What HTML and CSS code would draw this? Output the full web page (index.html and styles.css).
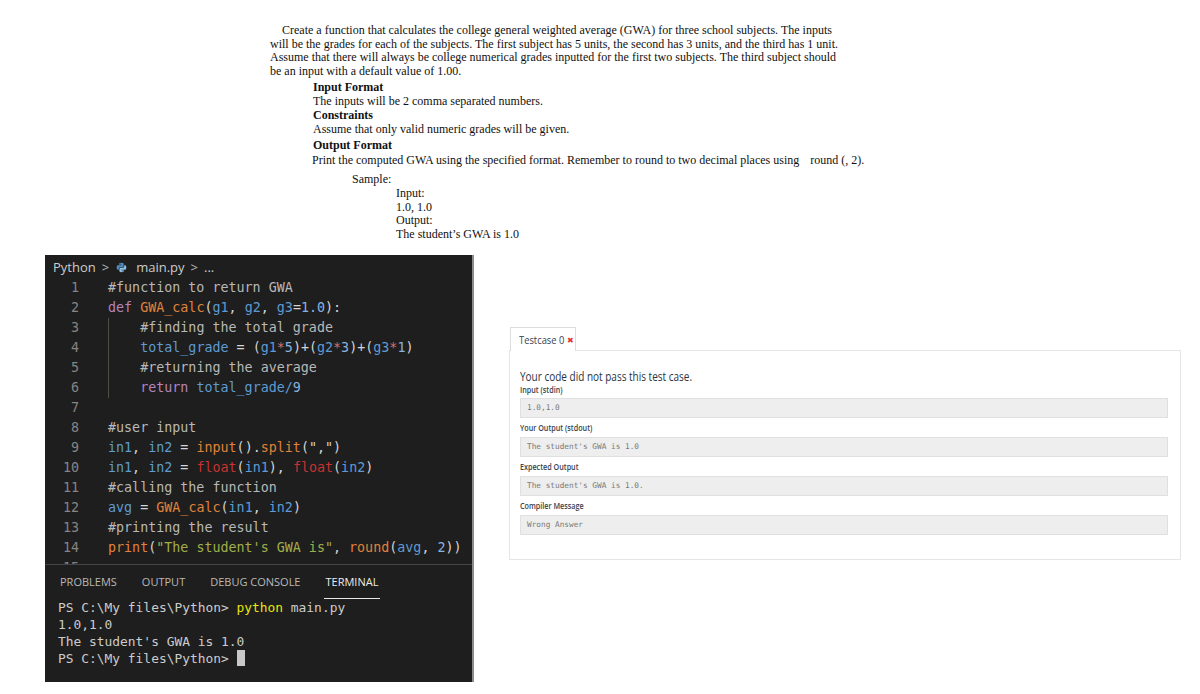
FILE: index.html
```html
<!DOCTYPE html>
<html>
<head>
<meta charset="utf-8">
<link rel="stylesheet" href="styles.css">
</head>
<body>
<div class="page">
  <section class="problem">
    <div class="para">
      <div class="pl first">Create a function that calculates the college general weighted average (GWA) for three school subjects. The inputs</div>
      <div class="pl">will be the grades for each of the subjects. The first subject has 5 units, the second has 3 units, and the third has 1 unit.</div>
      <div class="pl">Assume that there will always be college numerical grades inputted for the first two subjects. The third subject should</div>
      <div class="pl">be an input with a default value of 1.00.</div>
    </div>
    <div class="sec">
      <div class="pl h h-in">Input Format</div>
      <div class="pl">The inputs will be 2 comma separated numbers.</div>
      <div class="pl h">Constraints</div>
      <div class="pl">Assume that only valid numeric grades will be given.</div>
      <div class="pl h h-out">Output Format</div>
      <div class="pl print">Print the computed GWA using the specified format. Remember to round to two decimal places using <span class="rnd">round (, 2).</span></div>
    </div>
    <div class="sample">
      <div class="pl">Sample:</div>
      <div class="sample-body">
        <div class="pl">Input:</div>
        <div class="pl">1.0, 1.0</div>
        <div class="pl">Output:</div>
        <div class="pl">The student’s GWA is 1.0</div>
      </div>
    </div>
  </section>

  <div class="workspace">
    <div class="editor">
      <div class="crumbs">
        <span>Python</span>
        <span class="chev">&gt;</span>
        <svg class="pyicon" width="11" height="11" viewBox="0 0 16 16" aria-hidden="true">
          <path fill="#4f8fc4" d="M7.9 1C4.4 1 4.6 2.5 4.6 2.5v1.6H8v.5H3.2S1 4.3 1 7.9c0 3.5 1.9 3.4 1.9 3.4h1.2V9.6s-.1-1.9 1.9-1.9h3.3s1.8 0 1.8-1.8V2.8S11.4 1 7.9 1zM6.1 2c.3 0 .6.3.6.6s-.3.6-.6.6-.6-.3-.6-.6.3-.6.6-.6z"/>
          <path fill="#8cc0e6" d="M8.1 15c3.5 0 3.3-1.5 3.3-1.5v-1.6H8v-.5h4.8S15 11.7 15 8.1c0-3.5-1.9-3.4-1.9-3.4h-1.2v1.7s.1 1.9-1.9 1.9H6.7s-1.8 0-1.8 1.8v3.1S4.6 15 8.1 15zm1.8-1c-.3 0-.6-.3-.6-.6s.3-.6.6-.6.6.3.6.6-.3.6-.6.6z"/>
        </svg>
        <span>main.py</span>
        <span class="chev">&gt;</span>
        <span>...</span>
      </div>
      <div class="code">
        <div class="line"><span class="ln">1</span><span class="src"><span class="c">#function to return GWA</span></span></div>
        <div class="line"><span class="ln">2</span><span class="src"><span class="k">def</span> <span class="f">GWA_calc</span><span class="p">(</span><span class="v">g1</span><span class="p">, </span><span class="v">g2</span><span class="p">, </span><span class="v">g3</span><span class="p">=</span><span class="n">1.0</span><span class="p">):</span></span></div>
        <div class="line"><span class="ln">3</span><span class="src guide">    <span class="c">#finding the total grade</span></span></div>
        <div class="line"><span class="ln">4</span><span class="src guide">    <span class="v">total_grade</span> <span class="p">=</span> <span class="p">(</span><span class="v">g1</span><span class="o">*</span><span class="n">5</span><span class="p">)+(</span><span class="v">g2</span><span class="o">*</span><span class="n">3</span><span class="p">)+(</span><span class="v">g3</span><span class="o">*</span><span class="n">1</span><span class="p">)</span></span></div>
        <div class="line"><span class="ln">5</span><span class="src guide">    <span class="c">#returning the average</span></span></div>
        <div class="line"><span class="ln">6</span><span class="src guide">    <span class="k">return</span> <span class="v">total_grade</span><span class="v">/</span><span class="n">9</span></span></div>
        <div class="line"><span class="ln">7</span><span class="src"></span></div>
        <div class="line"><span class="ln">8</span><span class="src"><span class="c">#user input</span></span></div>
        <div class="line"><span class="ln">9</span><span class="src"><span class="v">in1</span><span class="p">, </span><span class="v">in2</span> <span class="p">=</span> <span class="f">input</span><span class="p">().</span><span class="f">split</span><span class="p">(",")</span></span></div>
        <div class="line"><span class="ln">10</span><span class="src"><span class="v">in1</span><span class="p">, </span><span class="v">in2</span> <span class="p">=</span> <span class="b">float</span><span class="p">(</span><span class="v">in1</span><span class="p">), </span><span class="b">float</span><span class="p">(</span><span class="v">in2</span><span class="p">)</span></span></div>
        <div class="line"><span class="ln">11</span><span class="src"><span class="c">#calling the function</span></span></div>
        <div class="line"><span class="ln">12</span><span class="src"><span class="v">avg</span> <span class="p">=</span> <span class="f">GWA_calc</span><span class="p">(</span><span class="v">in1</span><span class="p">, </span><span class="v">in2</span><span class="p">)</span></span></div>
        <div class="line"><span class="ln">13</span><span class="src"><span class="c">#printing the result</span></span></div>
        <div class="line"><span class="ln">14</span><span class="src"><span class="f">print</span><span class="p">(</span><span class="s">"The student's GWA is"</span><span class="p">, </span><span class="f">round</span><span class="p">(</span><span class="v">avg</span><span class="p">, </span><span class="n">2</span><span class="p">))</span></span></div>
        <div class="line"><span class="ln">15</span><span class="src"></span></div>
      </div>
      <div class="panel">
        <div class="tabs">
          <span class="tab">PROBLEMS</span>
          <span class="tab">OUTPUT</span>
          <span class="tab">DEBUG CONSOLE</span>
          <span class="tab active">TERMINAL</span>
        </div>
        <div class="term">
          <div class="tl">PS C:\My files\Python&gt; <span class="y">python</span> main.py</div>
          <div class="tl">1.0,1.0</div>
          <div class="tl">The student's GWA is 1.0</div>
          <div class="tl">PS C:\My files\Python&gt; <span class="cursor"></span></div>
        </div>
      </div>
    </div>

    <div class="results">
      <div class="tc-tab"><span class="sq">Testcase 0</span><span class="x">✖</span></div>
      <div class="tc-box">
        <div class="msg"><span class="sq">Your code did not pass this test case.</span></div>
        <div class="lbl"><span class="sq">Input (stdin)</span></div>
        <div class="out">1.0,1.0</div>
        <div class="lbl"><span class="sq">Your Output (stdout)</span></div>
        <div class="out">The student's GWA is 1.0</div>
        <div class="lbl"><span class="sq">Expected Output</span></div>
        <div class="out">The student's GWA is 1.0.</div>
        <div class="lbl"><span class="sq">Compiler Message</span></div>
        <div class="out">Wrong Answer</div>
      </div>
    </div>
  </div>
</div>
</body>
</html>
```

FILE: styles.css
```css
* { box-sizing: border-box; }
html, body { margin: 0; padding: 0; background: #ffffff; }
.page { width: 1200px; height: 694px; overflow: hidden; }

/* ---------- problem statement ---------- */
.problem {
  padding: 24px 0 0 270px;
  font-family: "Liberation Serif", "Times New Roman", serif;
  font-size: 12px;
  color: #111;
  height: 255px;
}
.pl { white-space: nowrap; line-height: 14px; }
.para .pl { line-height: 13.7px; }
.para .first { padding-left: 12px; }
.sec { padding-left: 43px; }
.h { font-weight: bold; }
.h-in { margin-top: 1px; }
.h-out { margin-top: 2px; }
.print { margin-left: -1px; margin-top: 1px; }
.rnd { margin-left: 8px; }
.sample { padding-left: 82px; margin-top: 5px; }
.sample-body { padding-left: 44px; margin-top: 1px; }
.sample-body .pl { line-height: 13.7px; }

/* ---------- workspace ---------- */
.workspace { display: flex; padding-left: 45px; }

.editor {
  width: 429px;
  height: 427px;
  background: #1e1e1e;
  border-right: 2px solid #8c8c8c;
  display: flex;
  flex-direction: column;
  flex: none;
}
.crumbs {
  flex: none;
  height: 23px;
  padding: 1px 0 0 8px;
  line-height: 22px;
  font-family: "Open Sans", "Noto Sans", sans-serif;
  font-size: 13px;
  color: #cccccc;
  display: flex;
  align-items: center;
  gap: 6px;
}
.crumbs .chev { color: #bbbbbb; font-size: 13px; }
.pyicon { margin: 0 3px 0 1px; }

.code {
  flex: none;
  height: 286px;
  overflow: hidden;
  font-family: "DejaVu Sans Mono", "Liberation Mono", monospace;
  font-size: 13.35px;
}
.line { display: flex; height: 20px; line-height: 20px; white-space: pre; }
.ln { width: 34px; text-align: right; color: #858585; flex: none; }
.src { margin-left: 29px; color: #d4d4d4; flex: 1; }
.src.guide { box-shadow: inset 1px 0 0 #4e4e44; }
.c { color: #b8b8b8; }
.k { color: #b584bd; }
.f { color: #e0823b; }
.v { color: #5e9bd2; }
.n { color: #86b3e0; }
.o { color: #d47070; }
.p { color: #d4d4d4; }
.s { color: #a1ae4a; }
.b { color: #c53332; }

.panel { border-top: 1px solid #454545; flex: 1; }
.tabs {
  height: 34px;
  padding-left: 15px;
  display: flex;
  font-family: "Open Sans", "Noto Sans", sans-serif;
  font-size: 11px;
  color: #b9b9b9;
}
.tab { height: 34px; padding-top: 1px; line-height: 32px; margin-right: 25px; }
.tab.active {
  color: #ececec;
  border-bottom: 1px solid #e7e7e7;
  padding: 1px 2px 0;
  margin-left: -2px;
}
.term {
  padding-left: 13px;
  font-family: "DejaVu Sans Mono", "Liberation Mono", monospace;
  font-size: 12.9px;
  line-height: 17px;
  color: #cccccc;
}
.tl { white-space: pre; height: 17px; }
.y { color: #e5e510; }
.cursor {
  display: inline-block;
  width: 8px;
  height: 16px;
  background: #c8c8c8;
  vertical-align: -3px;
}

/* ---------- test results ---------- */
.results {
  margin: 71px 0 0 35px;
  width: 672px;
  font-family: "Open Sans", "Noto Sans", sans-serif;
  color: #39424e;
}
.sq { display: inline-block; transform: scaleX(0.8); transform-origin: left center; white-space: nowrap; }
.tc-tab {
  display: inline-flex;
  align-items: center;
  width: 66px;
  height: 24px;
  margin-left: 1px;
  padding-left: 8px;
  border: 1px solid #dddddd;
  border-bottom: none;
  background: #fff;
  font-size: 11px;
  line-height: 23px;
  position: relative;
  top: 1px;
}
.tc-tab .sq { width: 48px; flex: none; transform: scaleX(0.85); }
.x { color: #e4342a; font-size: 8px; }
.tc-box {
  border: 1px solid #e6e6e6;
  height: 210px;
  padding: 18px 12px 0 10px;
}
.msg { font-size: 12.5px; line-height: 16px; color: #2b3440; }
.lbl { font-size: 9px; line-height: 10px; font-weight: 600; margin: 5px 0 4px 0; }
.msg + .lbl { margin-top: 0; margin-bottom: 3px; }
.out {
  height: 20px;
  background: #eeeeee;
  border: 1px solid #e0e0e0;
  padding-left: 6px;
  font-family: "DejaVu Sans Mono", "Liberation Mono", monospace;
  font-size: 7.75px;
  line-height: 18px;
  color: #7a7a7a;
  white-space: pre;
}
```
